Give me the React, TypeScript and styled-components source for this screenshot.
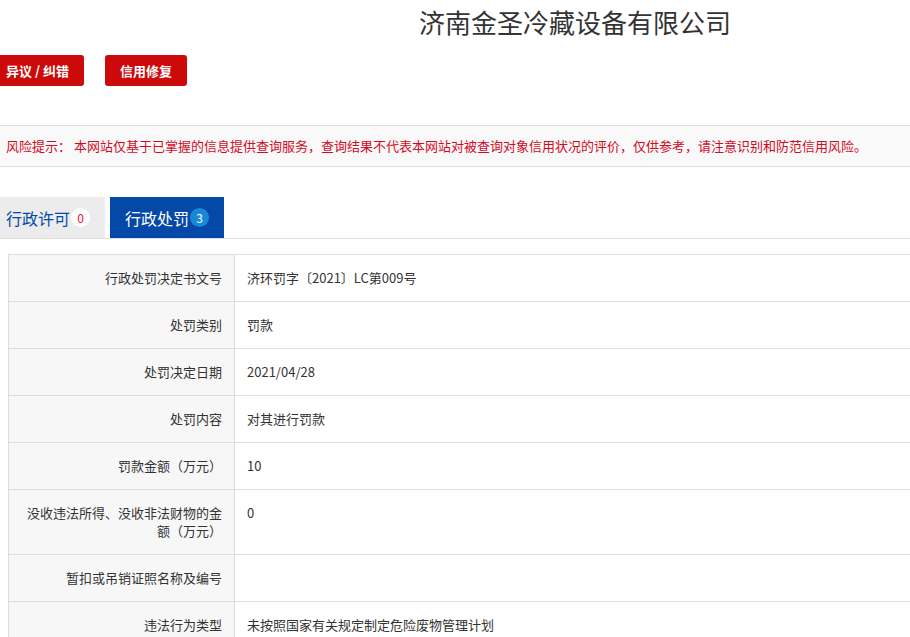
import React from "react";
import styled, { createGlobalStyle } from "styled-components";

const GlobalStyle = createGlobalStyle`
  html, body {
    margin: 0;
    padding: 0;
    background: #fff;
    overflow: hidden;
  }
  body {
    font-family: "Microsoft YaHei", "Noto Sans CJK SC", "Noto Sans", sans-serif;
    color: #333;
  }
`;

const Page = styled.div`
  width: 1168px;
  margin-left: -9px;
`;

const Title = styled.h1`
  margin: 0;
  padding-top: 4px;
  height: 37px;
  line-height: 36px;
  text-align: center;
  font-size: 26px;
  font-weight: 400;
  color: #333;
`;

const Actions = styled.div`
  display: flex;
  gap: 21px;
  margin-top: 14px;
`;

const RedButton = styled.button`
  height: 31px;
  padding: 0 15px;
  border: none;
  border-radius: 3px;
  background: #cc0a0a;
  color: #fff;
  font-family: inherit;
  font-size: 13px;
  font-weight: 600;
`;

const Notice = styled.div`
  margin-top: 39px;
  height: 40px;
  line-height: 40px;
  padding: 0 15px;
  background: #f9f9f9;
  border-top: 1px solid #ddd;
  border-bottom: 1px solid #ddd;
  color: #d40a1f;
  font-size: 13px;
`;

const Tabs = styled.div`
  display: flex;
  gap: 5px;
  margin-top: 30px;
  border-bottom: 1px solid #ddd;
`;

const Tab = styled.div<{ active?: boolean }>`
  display: flex;
  align-items: center;
  gap: 1px;
  height: 41px;
  padding: 0 15px;
  background: ${({ active }) => (active ? "#0449a8" : "#ececec")};
  color: ${({ active }) => (active ? "#fff" : "#0449a8")};
  font-size: 16px;
`;

const Badge = styled.span<{ active?: boolean }>`
  display: inline-flex;
  align-items: center;
  justify-content: center;
  width: 19px;
  height: 19px;
  border-radius: 50%;
  background: ${({ active }) => (active ? "#1a88d8" : "#fff")};
  color: ${({ active }) => (active ? "#fff" : "#e8102e")};
  font-size: 12px;
`;

const Table = styled.table`
  margin: 15px 0 0 17px;
  width: 1120px;
  border-collapse: collapse;
  font-size: 13px;
  line-height: 18px;
`;

const Label = styled.th`
  width: 201px;
  padding: 14px 12px;
  background: #f7f7f7;
  border: 1px solid #ddd;
  text-align: right;
  vertical-align: top;
  font-weight: 400;
  color: #333;
`;

const Value = styled.td`
  padding: 14px 12px;
  border: 1px solid #ddd;
  vertical-align: top;
  color: #333;
`;

const rows: [string, string][] = [
  ["行政处罚决定书文号", "济环罚字〔2021〕LC第009号"],
  ["处罚类别", "罚款"],
  ["处罚决定日期", "2021/04/28"],
  ["处罚内容", "对其进行罚款"],
  ["罚款金额（万元）", "10"],
  ["没收违法所得、没收非法财物的金额（万元）", "0"],
  ["暂扣或吊销证照名称及编号", ""],
  ["违法行为类型", "未按照国家有关规定制定危险废物管理计划"],
];

const App = () => {
  return (
    <>
      <GlobalStyle />
      <Page>
        <Title>济南金圣冷藏设备有限公司</Title>
        <Actions>
          <RedButton>异议 / 纠错</RedButton>
          <RedButton>信用修复</RedButton>
        </Actions>
        <Notice>
          风险提示： 本网站仅基于已掌握的信息提供查询服务，查询结果不代表本网站对被查询对象信用状况的评价，仅供参考，请注意识别和防范信用风险。
        </Notice>
        <Tabs>
          <Tab>
            行政许可<Badge>0</Badge>
          </Tab>
          <Tab active>
            行政处罚<Badge active>3</Badge>
          </Tab>
        </Tabs>
        <Table>
          <tbody>
            {rows.map(([k, v]) => (
              <tr key={k}>
                <Label>{k}</Label>
                <Value>{v}</Value>
              </tr>
            ))}
          </tbody>
        </Table>
      </Page>
    </>
  );
};

export default App;
